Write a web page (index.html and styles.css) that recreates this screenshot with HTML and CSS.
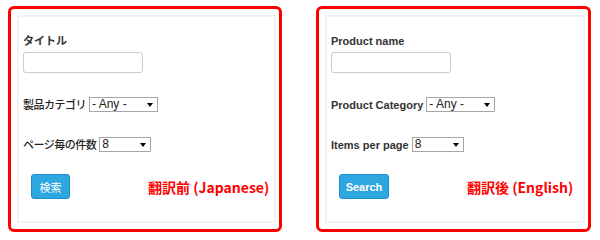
FILE: index.html
```html
<!DOCTYPE html>
<html lang="ja">
<head>
<meta charset="utf-8">
<link rel="stylesheet" href="styles.css">
</head>
<body>
<div class="page">
  <section class="panel">
    <div class="form">
      <div class="label label--bold">タイトル</div>
      <div class="input"></div>
      <div class="row row--cat">
        <span class="label label--ja">製品カテゴリ</span>
        <span class="select select--wide"><span class="select__text">- Any -</span><span class="select__arrow"></span></span>
      </div>
      <div class="row row--per">
        <span class="label label--ja">ページ毎の件数</span>
        <span class="select select--narrow"><span class="select__text">8</span><span class="select__arrow"></span></span>
      </div>
      <div class="actions">
        <button class="btn btn--ja">検索</button>
        <span class="tag">翻訳前 (Japanese)</span>
      </div>
    </div>
  </section>
  <section class="panel panel--right">
    <div class="form">
      <div class="label label--bold">Product name</div>
      <div class="input"></div>
      <div class="row row--cat">
        <span class="label label--bold">Product Category</span>
        <span class="select select--wide"><span class="select__text">- Any -</span><span class="select__arrow"></span></span>
      </div>
      <div class="row row--per">
        <span class="label label--bold">Items per page</span>
        <span class="select select--narrow"><span class="select__text">8</span><span class="select__arrow"></span></span>
      </div>
      <div class="actions">
        <button class="btn btn--en">Search</button>
        <span class="tag">翻訳後 (English)</span>
      </div>
    </div>
  </section>
</div>
</body>
</html>
```

FILE: styles.css
```css
html, body {
  margin: 0;
  padding: 0;
  background: #ffffff;
}

.page {
  display: flex;
  gap: 34px;
  padding: 6px 0 0 8px;
}

.panel {
  width: 274px;
  height: 226px;
  border: 3px solid #ff0000;
  border-radius: 6px;
  padding: 6px 3px 6px 6px;
  box-sizing: border-box;
}

.panel--right {
  width: 275px;
}

.form {
  height: 100%;
  box-sizing: border-box;
  border: 2px solid #f2f2f2;
  padding: 17px 4px 0 4px;
  display: flex;
  flex-direction: column;
  align-items: flex-start;
  font-family: "Liberation Sans", Arial, "Noto Sans CJK JP", sans-serif;
  color: #333333;
}

.label {
  font-size: 11px;
  line-height: 14px;
  font-family: "Liberation Sans", Arial, "Noto Sans CJK JP", sans-serif;
}

.label--bold {
  font-weight: bold;
}

.label--ja {
  font-weight: 500;
  letter-spacing: -0.5px;
  color: #222222;
}

.input {
  margin-top: 4px;
  width: 120px;
  height: 21px;
  box-sizing: border-box;
  border: 1px solid #cccccc;
  border-radius: 3px;
  background: #fff;
}

.row {
  display: flex;
  align-items: center;
  gap: 3px;
}

.row--cat {
  margin-top: 24px;
}

.row--per {
  margin-top: 25px;
}

.select {
  display: flex;
  align-items: center;
  justify-content: space-between;
  height: 15px;
  box-sizing: border-box;
  border: 1px solid #a6a6a6;
  padding: 0 4px 0 2px;
  background: #fff;
}

.select--wide {
  width: 69px;
}

.select--narrow {
  width: 52px;
}

.select__text {
  font-size: 12px;
  line-height: 13px;
  color: #222;
  font-family: "Liberation Sans", Arial, sans-serif;
}

.select__arrow {
  width: 0;
  height: 0;
  border-left: 3px solid transparent;
  border-right: 3px solid transparent;
  border-top: 4px solid #000;
}

.actions {
  margin-top: 22px;
  display: flex;
  align-items: center;
  align-self: stretch;
  padding-left: 8px;
}

.btn {
  height: 25px;
  box-sizing: border-box;
  border: 1px solid #1c8fd0;
  border-radius: 3px;
  background: #2ea6df;
  color: #ffffff;
  font-family: "Liberation Sans", Arial, "Noto Sans CJK JP", sans-serif;
  font-size: 11px;
  padding: 0;
}

.btn--ja {
  width: 39px;
  font-weight: normal;
}

.btn--en {
  width: 50px;
  font-weight: bold;
}

.tag {
  margin-left: 78px;
  color: #ff0000;
  font-weight: bold;
  font-size: 14px;
  line-height: 18px;
  font-family: "Noto Sans CJK JP", sans-serif;
}
```
